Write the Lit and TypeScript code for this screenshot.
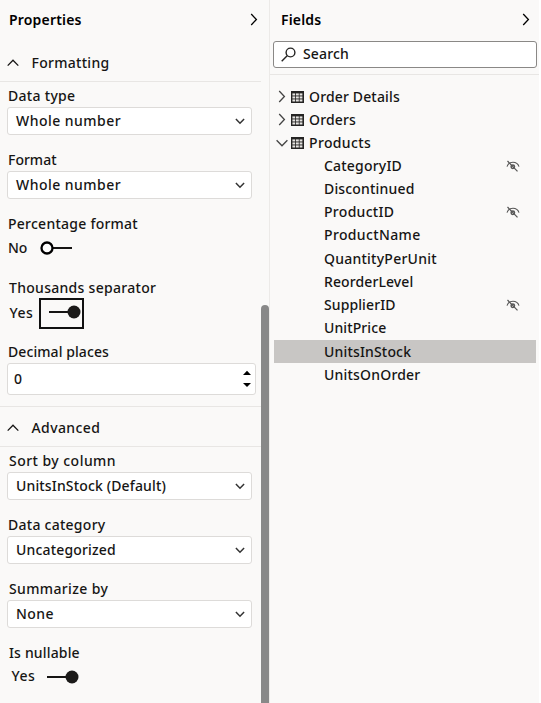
import { LitElement, html, css, svg, nothing } from "lit";
import { customElement } from "lit/decorators.js";
import { classMap } from "lit/directives/class-map.js";

const arrow = (w: number, h: number, d: string) => html`
  <svg width=${w} height=${h} viewBox="0 0 ${w} ${h}" fill="none">
    <path d=${d} stroke="currentColor" stroke-width="1.3" />
  </svg>`;

const right = () => arrow(8, 13, "M1.2 1 6.4 6.5 1.2 12");
const up = () => arrow(12, 8, "M.7 6.6 6 1.2 11.3 6.6");
const open = () => arrow(12, 8, "M.6 1.2 6 6.8 11.4 1.2");
const down = () => html`
  <svg class="down" width="10" height="7" viewBox="0 0 10 7" fill="none">
    <path d="M.9 1.1 5 5.3 9.1 1.1" stroke="#333" stroke-width="1.5" />
  </svg>`;

const table = html`
  <svg class="table" width="13" height="12" viewBox="0 0 13 12">
    <rect width="13" height="12" fill="#252423" />
    ${[0, 1, 2].map((r) => [0, 1, 2].map((c) => svg`
      <rect x=${1.4 + c * 3.6} y=${2.4 + r * 3} width="2.8" height="2.1" fill="#e6e4e2" />`))}
  </svg>`;

const hidden = html`
  <svg width="14" height="12" viewBox="0 0 14 12" fill="none" stroke="#555">
    <path d="M1 6.6C2 3.8 4.4 2.3 7 2.3s5 1.5 6 4.3" stroke-width="1.1" />
    <circle cx="6.8" cy="6.8" r="1.7" stroke-width="1.5" />
    <path d="M1.5 1 11.5 11.3" stroke-width="1.2" />
  </svg>`;

// Extra tracking per string, in px.
const tracking: Record<string, number> = {
  "Properties": 0.18, "Formatting": 0.28, "Data type": 0.3, "Whole number": 0.48,
  "Percentage format": 0.25, "Thousands separator": 0.29, "Decimal places": 0.08,
  "UnitsInStock (Default)": 0.15, "Advanced": 0.4, "Sort by column": 0.46,
  "Data category": 0.26, "Uncategorized": 0.17, "Summarize by": 0.36,
  "Is nullable": 0.16, "None": 0.4, "Yes": 0.5, "Fields": 0.15, "Search": 0.15,
  "Order Details": 0.15, "Orders": 0.15, "Products": 0.35, "CategoryID": 0.2,
  "Discontinued": 0.17, "ProductID": 0.3, "ProductName": 0.36, "QuantityPerUnit": 0.24,
  "ReorderLevel": 0.1, "SupplierID": 0.1, "UnitPrice": 0.1, "UnitsInStock": 0.17,
  "UnitsOnOrder": 0.2,
};

@customElement("app-root")
export class AppRoot extends LitElement {
  static styles = css`
    :host {
      display: grid;
      grid-template-columns: 269px 1px 269px;
      width: 541px;
      height: 703px;
      overflow: hidden;
      background: #fff;
      color: #161514;
      font: 500 14px/20px "Noto Sans", "Open Sans", sans-serif;
      white-space: nowrap;
    }
    svg { display: block; flex: none; }
    .pane { background: #faf9f8; min-width: 0; height: 703px; }
    .seam { background: #eceae8; }
    .head {
      display: flex; align-items: center; justify-content: space-between;
      height: 39px; box-sizing: border-box; padding: 0 11px 0 9px;
      font-weight: 600; color: #000;
    }
    .fields .head { padding: 0 9px 0 11px; }
    .body { display: grid; grid-template-columns: 261px 8px; height: 664px; }
    .track { padding-top: 266px; height: 398px; }
    .thumb { height: 410px; border-radius: 4px; background: #888; }
    .section {
      display: flex; align-items: center; gap: 12.5px;
      box-sizing: border-box; padding-left: 7px; height: 39px;
      border-bottom: 1px solid #e8e6e4;
    }
    .first { height: 43px; padding-top: 6px; }
    .second { height: 41px; border-top: 1px solid #e8e6e4; padding-top: 2px; }
    .group { padding: 4px 0 0 7px; height: 320px; box-sizing: border-box; }
    .formatting { height: 324px; }
    .item { height: 64px; }
    .label { padding-left: 1px; height: 21px; }
    .inset { padding-left: 2px; }
    .box {
      display: flex; align-items: center; justify-content: space-between;
      box-sizing: border-box; width: 245px; height: 28px; padding: 0 6px 1px 8px;
      border: 1px solid #dddbd9; border-radius: 3px; background: #fff;
    }
    .down { margin-top: 2px; }
    .spin { width: 249px; height: 32px; padding: 0 4px 0 6px; }
    .toggle {
      display: grid; grid-template-columns: 25px 45px; grid-template-rows: 100%;
      align-items: center; height: 28px; padding-left: 1px;
    }
    .knob { box-sizing: border-box; width: 45px; height: 31px; border: 2px solid transparent; padding: 4px 0 0 7px; }
    .knob.focus { border-color: #111; }
    .off { grid-template-columns: 21.5px 45px; height: 26px; }
    .off .knob { padding-top: 5.5px; }
    .focused { padding-left: 2.5px; grid-template-columns: 29.5px 45px; }
    .plain { padding-left: 4.5px; grid-template-columns: 25px 45px; height: 24px; }
    .plain .knob { padding-top: 6.5px; }
    .search {
      display: flex; align-items: center; gap: 7px; box-sizing: border-box;
      margin-left: 3px; width: 264px; height: 27px; padding: 0 7px 1px;
      border: 1px solid #8a8886; border-radius: 3px; background: #fff;
    }
    .above { padding-top: 2px; height: 33px; border-bottom: 1px solid #e8e6e4; }
    .tree { padding-top: 10px; }
    .node { display: flex; align-items: center; height: 23px; padding-left: 5px; }
    .arrow { display: flex; justify-content: center; width: 14px; margin-right: 2px; color: #444; }
    .table { margin-right: 5px; }
    .leaf {
      display: flex; align-items: center; justify-content: space-between;
      box-sizing: border-box; height: 23.25px; margin: 0 3px 0 4px; padding: 0 16px 0 50px;
    }
    .selected { background: #c8c6c4; }
  `;

  private text(s: string) {
    return html`<span style="letter-spacing:${tracking[s] ?? 0}px">${s}</span>`;
  }

  private label(s: string, inset = false) {
    return html`<div class=${classMap({ label: true, inset })}>${this.text(s)}</div>`;
  }

  private select(label: string, value: string, inset = false) {
    return html`<div class="item">
      ${this.label(label, inset)}
      <div class="box">${this.text(value)}${down()}</div>
    </div>`;
  }

  private toggle(label: string, on: boolean, focus = false) {
    return html`<div class="item">
      ${this.label(label, on)}
      <div class=${classMap({ toggle: true, off: !on, focused: focus, plain: on && !focus })}>
        ${this.text(on ? "Yes" : "No")}
        <div class=${classMap({ knob: true, focus })}>
          <svg width="34" height="16" viewBox="0 0 34 16">
            <path d="M${on ? "1 8H24" : "14 8H33"}" stroke="#161514" stroke-width="2" />
            <circle cx=${on ? 26 : 8} cy="8" r=${on ? 6.5 : 5.5} fill=${on ? "#1b1a19" : "#fff"}
              stroke="#000" stroke-width=${on ? 0 : 2.3} />
          </svg>
        </div>
      </div>
    </div>`;
  }

  render() {
    const leaves: [string, boolean][] = [
      ["CategoryID", true], ["Discontinued", false], ["ProductID", true],
      ["ProductName", false], ["QuantityPerUnit", false], ["ReorderLevel", false],
      ["SupplierID", true], ["UnitPrice", false], ["UnitsInStock", false], ["UnitsOnOrder", false],
    ];
    return html`
      <section class="pane">
        <div class="head">${this.text("Properties")}${right()}</div>
        <div class="body">
          <div>
            <div class="section first">${up()}${this.text("Formatting")}</div>
            <div class="group formatting">
              ${this.select("Data type", "Whole number")}
              ${this.select("Format", "Whole number")}
              ${this.toggle("Percentage format", false)}
              ${this.toggle("Thousands separator", true, true)}
              <div class="item">
                ${this.label("Decimal places")}
                <div class="box spin">${this.text("0")}
                  <svg width="8" height="18" viewBox="0 0 8 18">
                    <path d="M0 5 4 .8 8 5zM0 13 4 17 8 13z" fill="#000" />
                  </svg>
                </div>
              </div>
            </div>
            <div class="section second">${up()}${this.text("Advanced")}</div>
            <div class="group">
              ${this.select("Sort by column", "UnitsInStock (Default)", true)}
              ${this.select("Data category", "Uncategorized")}
              ${this.select("Summarize by", "None", true)}
              ${this.toggle("Is nullable", true)}
            </div>
          </div>
          <div class="track"><div class="thumb"></div></div>
        </div>
      </section>
      <div class="seam"></div>
      <section class="pane fields">
        <div class="head">${this.text("Fields")}${right()}</div>
        <div class="above">
          <div class="search">
            <svg width="15" height="15" viewBox="0 0 15 15" fill="none" stroke="#252423" stroke-width="1.4">
              <circle cx="9.5" cy="5.5" r="4.4" /><path d="M6.2 8.8.7 14.3" />
            </svg>
            ${this.text("Search")}
          </div>
        </div>
        <div class="tree">
          ${["Order Details", "Orders", "Products"].map((name, i) => html`
            <div class="node">
              <span class="arrow">${i < 2 ? right() : open()}</span>${table}${this.text(name)}
            </div>`)}
          ${leaves.map(([name, off]) => html`
            <div class=${classMap({ leaf: true, selected: name === "UnitsInStock" })}>
              ${this.text(name)}${off ? hidden : nothing}
            </div>`)}
        </div>
      </section>`;
  }
}
